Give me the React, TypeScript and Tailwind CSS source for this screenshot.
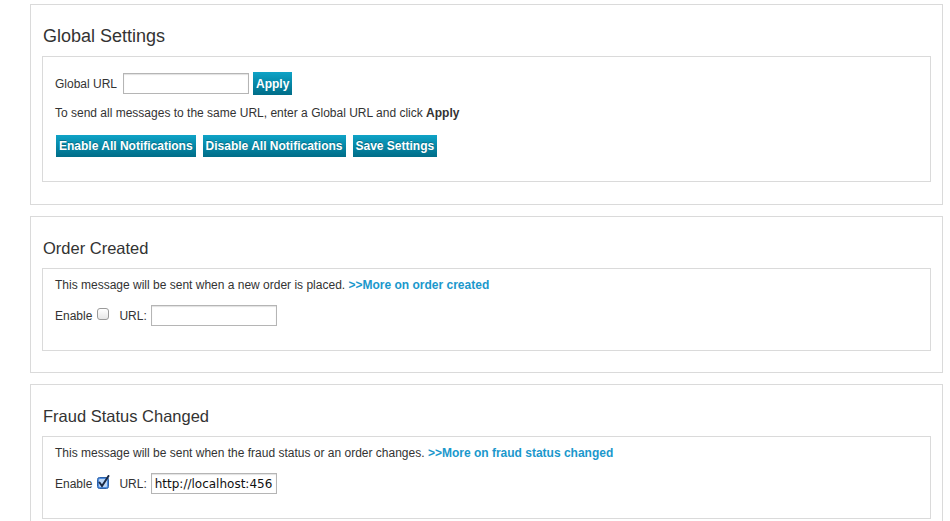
import React from 'react';

const font = { fontFamily: '"Liberation Sans", Arial, sans-serif' };

const Btn = ({ children }: { children: React.ReactNode }) => (
  <button className="h-[22px] px-[3px] bg-gradient-to-b from-[#0fa3c7] to-[#006d88] text-white font-bold text-[12px] leading-none [text-shadow:0_-1px_0_rgba(0,0,0,0.25)]">
    {children}
  </button>
);

const TextBox = ({ value = '' }: { value?: string }) => (
  <input
    readOnly
    value={value}
    className="w-[126px] h-[21px] border border-[#b5b5b5] bg-white px-[3px] text-[12px] text-[#111] shadow-[inset_0_1px_1px_rgba(0,0,0,0.12)] outline-none"
    style={{ fontFamily: '"DejaVu Sans", sans-serif' }}
  />
);

const Check = ({ checked }: { checked?: boolean }) =>
  checked ? (
    <svg width="13" height="14" viewBox="0 0 13 14" className="ml-[5px] mr-[4px] -mt-[3px]">
      <rect x="0.5" y="2.5" width="11" height="11" rx="2" fill="#4f8ee0" stroke="#2e62a8" />
      <rect x="2" y="4" width="8" height="8" rx="1" fill="#bcd6f5" />
      <path d="M2.5 7.5 L5 11 L11.5 1" fill="none" stroke="#1b2a45" strokeWidth="2" strokeLinecap="round" />
    </svg>
  ) : (
    <span className="ml-[5px] mr-[5px] inline-block w-[12px] h-[12px] rounded-[3px] border border-[#9a9a9a] bg-gradient-to-b from-white to-[#e6e6e6] -mt-[3px]" />
  );

const Panel = ({
  title,
  size,
  pb,
  children,
}: {
  title: string;
  size: string;
  pb: string;
  children: React.ReactNode;
}) => (
  <section className={`w-[913px] border border-[#dadada] bg-white px-[11px] pt-[21px] ${pb}`}>
    <h2 className={`${size} leading-[20px] text-[#333] mb-[10px] pl-[1px]`}>{title}</h2>
    {children}
  </section>
);

const Notification = ({
  text,
  link,
  checked,
  url,
}: {
  text: string;
  link: string;
  checked?: boolean;
  url?: string;
}) => (
  <div className="border border-[#dadada] px-[12px] pt-[8px] pb-[23px]">
    <p className="text-[12px] leading-[16px] text-[#333]">
      {text} <a className="font-bold text-[#1b98cc]">&gt;&gt;More on {link}</a>
    </p>
    <div className="mt-[11px] h-[23px] flex items-center text-[12px] text-[#333]">
      <span>Enable</span>
      <Check checked={checked} />
      <span className="ml-[5px] mr-[4px]">URL:</span>
      <TextBox value={url} />
    </div>
  </div>
);

export default function App() {
  return (
    <div className="h-[521px] overflow-hidden bg-white pl-[30px] pt-[4px]" style={font}>
      <div className="flex flex-col gap-[11px]">
        <Panel title="Global Settings" size="text-[18px]" pb="pb-[22px]">
          <div className="border border-[#dadada] px-[12px] pt-[15px] pb-[24px]">
            <div className="h-[23px] flex items-center text-[12px] text-[#333]">
              <span className="mr-[6px]">Global URL</span>
              <TextBox />
              <span className="ml-[4px]">
                <button className="h-[23px] px-[3px] bg-gradient-to-b from-[#0fa3c7] to-[#006d88] text-white font-bold text-[12px] leading-none">
                  Apply
                </button>
              </span>
            </div>
            <p className="mt-[10px] text-[12px] leading-[16px] text-[#333]">
              To send all messages to the same URL, enter a Global URL and click <b>Apply</b>
            </p>
            <div className="mt-[14px] ml-[1px] flex gap-[7px]">
              <Btn>Enable All Notifications</Btn>
              <Btn>Disable All Notifications</Btn>
              <Btn>Save Settings</Btn>
            </div>
          </div>
        </Panel>

        <Panel title="Order Created" size="text-[16.5px]" pb="pb-[21px]">
          <Notification text="This message will be sent when a new order is placed." link="order created" />
        </Panel>

        <Panel title="Fraud Status Changed" size="text-[16.5px]" pb="pb-[21px]">
          <Notification
            text="This message will be sent when the fraud status or an order changes."
            link="fraud status changed"
            checked
            url="http://localhost:456"
          />
        </Panel>
      </div>
    </div>
  );
}
